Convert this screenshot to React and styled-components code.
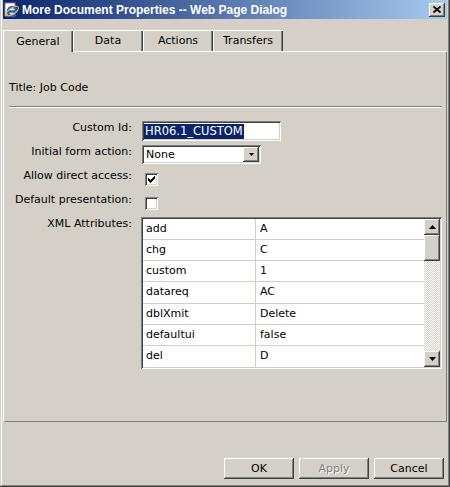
import React from "react";
import styled, { createGlobalStyle, css } from "styled-components";

const rows = [
  ["add", "A"],
  ["chg", "C"],
  ["custom", "1"],
  ["datareq", "AC"],
  ["dblXmit", "Delete"],
  ["defaultui", "false"],
  ["del", "D"],
];

const tabs = ["General", "Data", "Actions", "Transfers"];

const GlobalStyle = createGlobalStyle`
  html, body {
    margin: 0;
    padding: 0;
    background: #d4d0c8;
  }
  body {
    font-family: "DejaVu Sans", Verdana, sans-serif;
    font-size: 11px;
    color: #000;
  }
  * {
    box-sizing: border-box;
  }
`;

const raised = css`
  background: #d4d0c8;
  box-shadow: inset -1px -1px #404040, inset 1px 1px #ffffff,
    inset -2px -2px #808080, inset 2px 2px #d4d0c8;
`;

const sunken = css`
  background: #ffffff;
  box-shadow: inset 1px 1px #808080, inset -1px -1px #ffffff,
    inset 2px 2px #404040, inset -2px -2px #d4d0c8;
`;

const IeIcon = () => (
  <svg width="16" height="16" viewBox="0 0 16 16">
    <rect x="1" y="1" width="10" height="13" fill="#fff" stroke="#8a8a8a" strokeWidth="1" />
    <path d="M4 9.5 h9 a4.6 4.6 0 1 0 -1.3 3.3" fill="none" stroke="#1b5fd0" strokeWidth="2.4" />
    <ellipse cx="8.5" cy="9" rx="7" ry="3" fill="none" stroke="#f2b01e" strokeWidth="1.2" transform="rotate(-35 8.5 9)" />
  </svg>
);

const ArrowDown = ({ w = 7, h = 4 }) => (
  <svg width={w} height={h} viewBox={`0 0 ${w} ${h}`}>
    <polygon points={`0,0 ${w},0 ${w / 2},${h}`} fill="#000" />
  </svg>
);

const ArrowUp = ({ w = 7, h = 4 }) => (
  <svg width={w} height={h} viewBox={`0 0 ${w} ${h}`}>
    <polygon points={`0,${h} ${w},${h} ${w / 2},0`} fill="#000" />
  </svg>
);

const CheckMark = () => (
  <svg width="7" height="7" viewBox="0 0 7 7" shapeRendering="crispEdges">
    <path
      d="M6 0h1v1h-1zM5 1h2v1h-2zM0 2h1v1h-1zM4 2h3v1h-3zM0 3h2v1h-2zM3 3h3v1h-3zM0 4h5v1h-5zM1 5h3v1h-3zM2 6h1v1h-1z"
      fill="#000"
    />
  </svg>
);

export default function App() {
  return (
    <>
      <GlobalStyle />
      <Window>
        <TitleBar>
          <IeIcon />
          <TitleText>More Document Properties -- Web Page Dialog</TitleText>
          <CloseButton>
            <svg width="8" height="7" viewBox="0 0 8 7">
              <path d="M0.5 0.5 L7.5 6.5 M7.5 0.5 L0.5 6.5" stroke="#000" strokeWidth="1.7" />
            </svg>
          </CloseButton>
        </TitleBar>

        <TabStrip>
          {tabs.map((t, i) => (
            <Tab key={t} $active={i === 0}>
              {t}
            </Tab>
          ))}
        </TabStrip>

        <Panel>
          <DocTitle>Title: Job Code</DocTitle>
          <Separator />

          <Form>
            <FieldRow>
              <FieldLabel>Custom Id:</FieldLabel>
              <TextBox>
                <Selected>HR06.1_CUSTOM</Selected>
              </TextBox>
            </FieldRow>
            <FieldRow>
              <FieldLabel>Initial form action:</FieldLabel>
              <SelectBox>
                <SelectValue>None</SelectValue>
                <DropButton>
                  <ArrowDown w={5} h={3} />
                </DropButton>
              </SelectBox>
            </FieldRow>
            <FieldRow>
              <FieldLabel>Allow direct access:</FieldLabel>
              <CheckBox>
                <CheckMark />
              </CheckBox>
            </FieldRow>
            <FieldRow>
              <FieldLabel>Default presentation:</FieldLabel>
              <CheckBox />
            </FieldRow>
            <FieldRow>
              <FieldLabel>XML Attributes:</FieldLabel>
              <ListBox>
                <Grid>
                  {rows.map(([k, v], i) => (
                    <React.Fragment key={k}>
                      <Cell $first $last={i === rows.length - 1}>
                        {k}
                      </Cell>
                      <Cell $last={i === rows.length - 1}>{v}</Cell>
                    </React.Fragment>
                  ))}
                </Grid>
                <ScrollBar>
                  <ScrollButton>
                    <ArrowUp />
                  </ScrollButton>
                  <Thumb />
                  <Track />
                  <ScrollButton>
                    <ArrowDown />
                  </ScrollButton>
                </ScrollBar>
              </ListBox>
            </FieldRow>
          </Form>
        </Panel>

        <Footer>
          <Button>OK</Button>
          <Button $disabled>Apply</Button>
          <Button>Cancel</Button>
        </Footer>
      </Window>
    </>
  );
}

const Window = styled.div`
  width: 450px;
  height: 487px;
  display: flex;
  flex-direction: column;
  padding: 0 3px 3px;
  background: #d4d0c8;
  box-shadow: inset -1px -1px #404040, inset 1px 0 #d4d0c8,
    inset -2px -2px #808080, inset 2px 0 #ffffff;
`;

const TitleBar = styled.div`
  height: 19px;
  flex: none;
  display: flex;
  align-items: center;
  padding: 0 2px 0 1px;
  background: linear-gradient(to right, #0a246a, #a6caf0);
`;

const TitleText = styled.div`
  flex: 1;
  margin-left: 2px;
  color: #fff;
  font: bold 12px "Liberation Sans", Arial, sans-serif;
  white-space: nowrap;
`;

const CloseButton = styled.div`
  width: 16px;
  height: 14px;
  display: flex;
  align-items: center;
  justify-content: center;
  ${raised}
`;

const TabStrip = styled.div`
  flex: none;
  height: 21px;
  margin-top: 11px;
  display: flex;
  align-items: flex-end;
`;

const Tab = styled.div`
  width: 70px;
  height: ${(p) => (p.$active ? 22 : 21)}px;
  margin-bottom: ${(p) => (p.$active ? -1 : 0)}px;
  padding-top: ${(p) => (p.$active ? 1 : 0)}px;
  position: relative;
  z-index: ${(p) => (p.$active ? 1 : 0)};
  display: flex;
  align-items: center;
  justify-content: center;
  background: #d4d0c8;
  box-shadow: inset 1px 1px #ffffff, inset -1px 0 #404040, inset -2px 0 #808080;
`;

const Panel = styled.div`
  flex: 1;
  display: flex;
  flex-direction: column;
  padding: 30px 5px 0 6px;
  box-shadow: inset 1px 1px #ffffff, inset -1px -1px #808080;
`;

const DocTitle = styled.div`
  line-height: 14px;
`;

const Separator = styled.div`
  height: 2px;
  margin-top: 11px;
  border-top: 1px solid #808080;
  border-bottom: 1px solid #ffffff;
`;

const Form = styled.div`
  margin-top: 13px;
  display: flex;
  flex-direction: column;
  gap: 4px;
`;

const FieldRow = styled.div`
  display: grid;
  grid-template-columns: 123px 1fr;
  column-gap: 10px;
  min-height: 20px;
  align-items: start;
`;

const FieldLabel = styled.div`
  text-align: right;
  line-height: 14px;
  white-space: nowrap;
`;

const TextBox = styled.div`
  width: 139px;
  height: 20px;
  padding: 2px 2px 2px 2px;
  display: flex;
  align-items: center;
  ${sunken}
`;

const Selected = styled.span`
  background: #0a246a;
  color: #fff;
  font-size: 11.5px;
  line-height: 15px;
  padding: 0 1px;
`;

const SelectBox = styled.div`
  width: 119px;
  height: 19px;
  padding: 2px;
  display: flex;
  align-items: center;
  ${sunken}
`;

const SelectValue = styled.div`
  flex: 1;
  padding-left: 2px;
  line-height: 15px;
`;

const DropButton = styled.div`
  width: 16px;
  height: 15px;
  display: flex;
  align-items: center;
  justify-content: center;
  ${raised}
`;

const CheckBox = styled.div`
  width: 13px;
  height: 13px;
  margin-left: 3px;
  align-self: center;
  display: flex;
  align-items: center;
  justify-content: center;
  ${sunken}
`;

const ListBox = styled.div`
  width: 301px;
  height: 152px;
  margin-left: -1px;
  padding: 2px;
  display: flex;
  ${sunken}
`;

const Grid = styled.div`
  flex: 1;
  display: grid;
  grid-template-columns: 113px 1fr;
  grid-template-rows: repeat(7, 1fr);
`;

const Cell = styled.div`
  display: flex;
  align-items: center;
  padding-left: ${(p) => (p.$first ? 3 : 4)}px;
  line-height: 14px;
  border-right: ${(p) => (p.$first ? "1px solid #d4d0c8" : "none")};
  border-bottom: ${(p) => (p.$last ? "none" : "1px solid #d4d0c8")};
`;

const ScrollBar = styled.div`
  width: 16px;
  display: flex;
  flex-direction: column;
  background: repeating-conic-gradient(#ffffff 0 25%, #d4d0c8 0 50%) 0 0 / 2px 2px;
`;

const ScrollButton = styled.div`
  height: 16px;
  flex: none;
  display: flex;
  align-items: center;
  justify-content: center;
  ${raised}
`;

const Thumb = styled.div`
  height: 26px;
  flex: none;
  ${raised}
`;

const Track = styled.div`
  flex: 1;
`;

const Footer = styled.div`
  height: 62px;
  flex: none;
  display: flex;
  justify-content: flex-end;
  align-items: flex-start;
  gap: 5px;
  padding: 36px 3px 0 0;
`;

const Button = styled.div`
  width: 70px;
  height: 21px;
  display: flex;
  align-items: center;
  justify-content: center;
  color: ${(p) => (p.$disabled ? "#808080" : "#000")};
  text-shadow: ${(p) => (p.$disabled ? "1px 1px #ffffff" : "none")};
  ${raised}
`;
